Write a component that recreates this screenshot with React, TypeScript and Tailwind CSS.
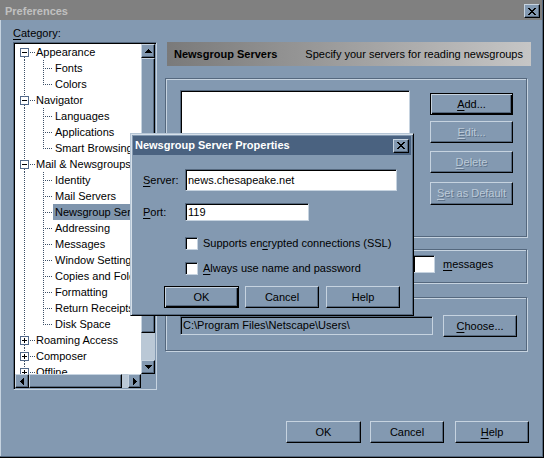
import React from 'react';

const F = "font-['Liberation_Sans',Arial,sans-serif]";
const RAISED =
  'bg-[#8399b1] border border-t-[#c6d3e0] border-l-[#c6d3e0] border-r-black border-b-black shadow-[inset_-1px_-1px_0_#55687e]';
const DEFAULT_BTN =
  'bg-[#8399b1] border border-black shadow-[inset_1px_1px_0_#c6d3e0,inset_-1px_-1px_0_#000,inset_-2px_-2px_0_#55687e]';
const SUNKEN =
  'border border-t-[#55687e] border-l-[#55687e] border-r-[#c6d3e0] border-b-[#c6d3e0] shadow-[inset_1px_1px_0_#000]';
const ETCHED = 'border border-[#55687e] shadow-[inset_1px_1px_0_#c6d3e0,1px_1px_0_#c6d3e0]';
const DISABLED_TXT = 'text-[#bccad8] [text-shadow:1px_1px_0_#5f738a]';

function CloseGlyph() {
  return (
    <svg width="8" height="7" viewBox="0 0 8 7" shapeRendering="crispEdges">
      <path
        d="M0 0h2v1H0z M6 0h2v1H6z M1 1h2v1H1z M5 1h2v1H5z M2 2h4v1H2z M3 3h2v1H3z M2 4h4v1H2z M1 5h2v1H1z M5 5h2v1H5z M0 6h2v1H0z M6 6h2v1H6z"
        fill="#000"
      />
    </svg>
  );
}

function Arrow({ dir }: { dir: 'up' | 'down' | 'left' | 'right' }) {
  if (dir === 'up')
    return (
      <svg width="7" height="4" viewBox="0 0 7 4" shapeRendering="crispEdges">
        <path d="M3 0h1v1H3z M2 1h3v1H2z M1 2h5v1H1z M0 3h7v1H0z" fill="#000" />
      </svg>
    );
  if (dir === 'down')
    return (
      <svg width="7" height="4" viewBox="0 0 7 4" shapeRendering="crispEdges">
        <path d="M0 0h7v1H0z M1 1h5v1H1z M2 2h3v1H2z M3 3h1v1H3z" fill="#000" />
      </svg>
    );
  if (dir === 'left')
    return (
      <svg width="4" height="7" viewBox="0 0 4 7" shapeRendering="crispEdges">
        <path d="M0 3h1v1H0z M1 2h1v3H1z M2 1h1v5H2z M3 0h1v7H3z" fill="#000" />
      </svg>
    );
  return (
    <svg width="4" height="7" viewBox="0 0 4 7" shapeRendering="crispEdges">
      <path d="M0 0h1v7H0z M1 1h1v5H1z M2 2h1v3H2z M3 3h1v1H3z" fill="#000" />
    </svg>
  );
}

const DOT = '#3e5168';

type Item = { t: string; top?: boolean; exp?: '+' | '-'; last?: boolean; sel?: boolean; first?: boolean };

const items: Item[] = [
  { t: 'Appearance', top: true, exp: '-', first: true },
  { t: 'Fonts' },
  { t: 'Colors', last: true },
  { t: 'Navigator', top: true, exp: '-' },
  { t: 'Languages' },
  { t: 'Applications' },
  { t: 'Smart Browsing', last: true },
  { t: 'Mail & Newsgroups', top: true, exp: '-' },
  { t: 'Identity' },
  { t: 'Mail Servers' },
  { t: 'Newsgroup Servers', sel: true },
  { t: 'Addressing' },
  { t: 'Messages' },
  { t: 'Window Settings' },
  { t: 'Copies and Folders' },
  { t: 'Formatting' },
  { t: 'Return Receipts' },
  { t: 'Disk Space', last: true },
  { t: 'Roaming Access', top: true, exp: '+' },
  { t: 'Composer', top: true, exp: '+' },
  { t: 'Offline', top: true, exp: '+' },
  { t: 'Advanced', top: true, exp: '+' },
];

function TreeRow({ it }: { it: Item }) {
  if (it.top) {
    return (
      <div className="flex h-4 items-center whitespace-nowrap">
        <svg width="20" height="16" viewBox="0 0 20 16" shapeRendering="crispEdges" className="shrink-0">
          {!it.first && <line x1="9.5" y1="0" x2="9.5" y2="4" stroke={DOT} strokeDasharray="1 1" />}
          <line x1="9.5" y1="13" x2="9.5" y2="16" stroke={DOT} strokeDasharray="1 1" />
          <line x1="15" y1="8.5" x2="20" y2="8.5" stroke={DOT} strokeDasharray="1 1" />
          <rect x="5.5" y="4.5" width="8" height="8" fill="#fff" stroke="#52698a" />
          <path d="M7 8h5v1H7z" fill="#000" />
          {it.exp === '+' && <path d="M9 6h1v5H9z" fill="#000" />}
        </svg>
        <span className="ml-px leading-4">{it.t}</span>
      </div>
    );
  }
  return (
    <div className="flex h-4 items-center whitespace-nowrap">
      <svg width="38" height="16" viewBox="0 0 38 16" shapeRendering="crispEdges" className="shrink-0">
        <line x1="9.5" y1="0" x2="9.5" y2="16" stroke={DOT} strokeDasharray="1 1" />
        <line x1="28.5" y1="0" x2="28.5" y2={it.last ? 9 : 16} stroke={DOT} strokeDasharray="1 1" />
        <line x1="30" y1="8.5" x2="38" y2="8.5" stroke={DOT} strokeDasharray="1 1" />
      </svg>
      <span className={`px-[2px] leading-4 ${it.sel ? 'bg-[#7f95ad]' : ''}`}>{it.t}</span>
    </div>
  );
}

function U({ children }: { children: React.ReactNode }) {
  return <span className="underline underline-offset-[2px] decoration-1">{children}</span>;
}

export default function App() {
  return (
    <div className={`${F} text-[11px] text-black relative w-[544px] h-[458px] bg-black pr-px pb-px select-none`}>
      <div className="w-full h-full bg-[#55687e] pr-px pb-px">
        <div className="w-full h-full bg-[#8399b1] flex flex-col">
          {/* Title bar */}
          <div className="h-[20px] shrink-0 bg-[#808080] flex items-center justify-between pl-[5px] pr-[2px] pt-[2px]">
            <span className="font-bold text-[#c0c0c0] leading-none">Preferences</span>
            <div className={`w-[16px] h-[14px] ${RAISED} flex items-center justify-center`}>
              <CloseGlyph />
            </div>
          </div>

          {/* Body */}
          <div className="flex-1 flex flex-col border-l border-l-[#c6d3e0]">
            <div className="flex items-start pl-[12px]">
              {/* Left column */}
              <div className="w-[144px] pt-[7px] flex flex-col">
                <div className="h-[13px] leading-[13px]">
                  <U>C</U>ategory:
                </div>
                <div className={`mt-[2px] w-[144px] h-[348px] bg-[#8399b1] ${SUNKEN} p-px flex flex-col`}>
                  <div className="flex flex-1 min-h-0">
                    <div className="w-[126px] h-[330px] bg-white overflow-hidden">
                      {items.map((it) => (
                        <TreeRow key={it.t} it={it} />
                      ))}
                    </div>
                    <div className="w-[14px] flex flex-col">
                      <div className={`h-[14px] ${RAISED} flex items-center justify-center`}>
                        <Arrow dir="up" />
                      </div>
                      <div className={`h-[275px] ${RAISED}`} />
                      <div className="flex-1 bg-[#bac8d6]" />
                      <div className={`h-[14px] ${RAISED} flex items-center justify-center`}>
                        <Arrow dir="down" />
                      </div>
                    </div>
                  </div>
                  <div className="h-[14px] flex">
                    <div className="w-[126px] flex">
                      <div className={`w-[14px] ${RAISED} flex items-center justify-center`}>
                        <Arrow dir="left" />
                      </div>
                      <div className={`w-[93px] ${RAISED}`} />
                      <div className="flex-1 bg-[#bac8d6]" />
                      <div className={`w-[13px] ${RAISED} flex items-center justify-center`}>
                        <Arrow dir="right" />
                      </div>
                    </div>
                    <div className="flex-1" />
                  </div>
                </div>
              </div>

              {/* Right column */}
              <div className="ml-[8px] w-[366px] pt-[22px] flex flex-col">
                <div className="ml-[2px] w-[364px] h-[24px] bg-linear-to-r from-[#7a7a7a] to-[#c6c6c6] flex items-center justify-between pl-[7px] pr-[8px]">
                  <span className="font-bold">Newsgroup Servers</span>
                  <span>Specify your servers for reading newsgroups</span>
                </div>

                {/* Group 1 */}
                <div className={`mt-[12px] w-[362px] h-[159px] ${ETCHED} flex items-start pl-[14px] pt-[11px]`}>
                  <div className={`w-[230px] h-[135px] bg-white ${SUNKEN}`} />
                  <div className="ml-[20px] w-[83px] flex flex-col">
                    <div className={`mt-[3px] h-[22px] ${DEFAULT_BTN} flex items-center justify-center`}>
                      <span>
                        <U>A</U>dd...
                      </span>
                    </div>
                    <div className={`mt-[6px] h-[22px] ${RAISED} flex items-center justify-center`}>
                      <span className={DISABLED_TXT}>
                        <U>E</U>dit...
                      </span>
                    </div>
                    <div className={`mt-[8px] h-[22px] ${RAISED} flex items-center justify-center`}>
                      <span className={DISABLED_TXT}>
                        <U>D</U>elete
                      </span>
                    </div>
                    <div className={`mt-[9px] h-[23px] ${RAISED} flex items-center justify-center`}>
                      <span className={DISABLED_TXT}>
                        <U>S</U>et as Default
                      </span>
                    </div>
                  </div>
                </div>

                {/* Group 2 */}
                <div className={`mt-[12px] w-[362px] h-[34px] ${ETCHED} flex items-start pl-[247px] pt-[5px]`}>
                  <div className="flex items-center h-[18px]">
                    <div className={`w-[22px] h-[18px] bg-white ${SUNKEN}`} />
                    <span className="ml-[8px]">
                      <U>m</U>essages
                    </span>
                  </div>
                </div>

                {/* Group 3 */}
                <div className={`mt-[14px] w-[362px] h-[54px] ${ETCHED} flex items-start pl-[14px] pt-[18px]`}>
                  <div className={`w-[253px] h-[19px] ${SUNKEN} flex items-center pl-[2px] whitespace-nowrap overflow-hidden`}>
                    C:\Program Files\Netscape\Users\
                  </div>
                  <div className={`ml-[10px] -mt-[1px] w-[74px] h-[22px] ${RAISED} flex items-center justify-center`}>
                    <span>
                      <U>C</U>hoose...
                    </span>
                  </div>
                </div>
              </div>
            </div>

            {/* Bottom buttons */}
            <div className="mt-auto flex justify-end pr-[13px] pb-[13px]">
              <div className={`w-[75px] h-[22px] ${RAISED} flex items-center justify-center`}>OK</div>
              <div className={`ml-[9px] w-[74px] h-[22px] ${RAISED} flex items-center justify-center`}>Cancel</div>
              <div className={`ml-[11px] w-[74px] h-[22px] ${RAISED} flex items-center justify-center`}>
                <span>
                  <U>H</U>elp
                </span>
              </div>
            </div>
          </div>
        </div>
      </div>

      {/* Dialog window */}
      <div className="absolute left-[130px] top-[133px] w-[284px] h-[183px] bg-[#8399b1] border border-t-[#b5c5d5] border-l-[#b5c5d5] border-r-black border-b-black shadow-[inset_1px_1px_0_#d6e0ea,inset_-1px_-1px_0_#55687e] p-[2px] flex flex-col">
        <div className="h-[19px] shrink-0 bg-[#4a6280] flex items-center justify-between pl-[2px] pr-[2px]">
          <span className="font-bold text-white leading-none">Newsgroup Server Properties</span>
          <div className={`w-[16px] h-[14px] ${RAISED} flex items-center justify-center`}>
            <CloseGlyph />
          </div>
        </div>

        <div className="mt-[14px] flex items-center">
          <span className="ml-[10px] w-[42px]">
            <U>S</U>erver:
          </span>
          <div className={`w-[212px] h-[22px] bg-white ${SUNKEN} flex items-center pl-[2px]`}>news.chesapeake.net</div>
        </div>
        <div className="mt-[12px] flex items-center">
          <span className="ml-[10px] w-[42px]">
            <U>P</U>ort:
          </span>
          <div className={`w-[124px] h-[18px] bg-white ${SUNKEN} flex items-center pl-[2px]`}>119</div>
        </div>

        <div className="mt-[16px] ml-[52px] flex items-center h-[13px]">
          <div className={`w-[13px] h-[13px] bg-white ${SUNKEN}`} />
          <span className="ml-[5px] leading-[13px]">
            Supports en<U>c</U>rypted connections (SSL)
          </span>
        </div>
        <div className="mt-[12px] ml-[52px] flex items-center h-[13px]">
          <div className={`w-[13px] h-[13px] bg-white ${SUNKEN}`} />
          <span className="ml-[5px] leading-[13px]">
            <U>A</U>lways use name and password
          </span>
        </div>

        <div className="mt-[11px] ml-[31px] flex">
          <div className={`w-[75px] h-[22px] ${DEFAULT_BTN} flex items-center justify-center`}>OK</div>
          <div className={`ml-[6px] w-[74px] h-[22px] ${RAISED} flex items-center justify-center`}>Cancel</div>
          <div className={`ml-[7px] w-[74px] h-[22px] ${RAISED} flex items-center justify-center`}>Help</div>
        </div>
      </div>
    </div>
  );
}
